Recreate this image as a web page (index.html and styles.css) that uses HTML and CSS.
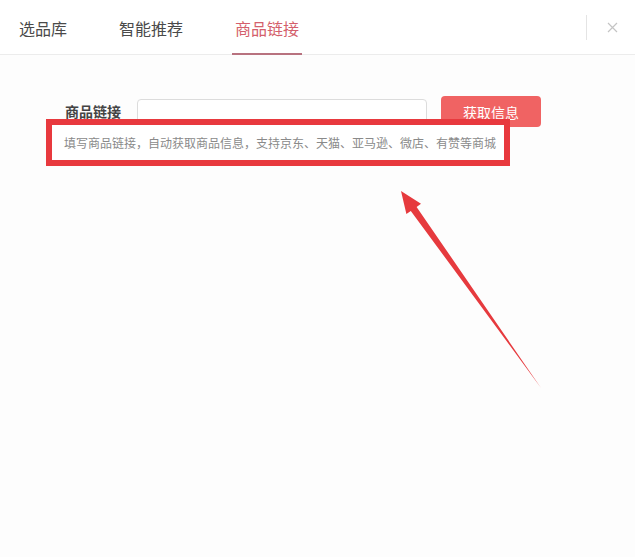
FILE: index.html
```html
<!DOCTYPE html>
<html lang="zh-CN">
<head>
    <meta charset="UTF-8">
    <meta name="viewport" content="width=device-width, initial-scale=1.0">
    <title>商品链接</title>
    <link rel="stylesheet" href="styles.css">
</head>
<body>
    <div class="dialog">
        <div class="tabs">
            <div class="tab">选品库</div>
            <div class="tab">智能推荐</div>
            <div class="tab active">商品链接</div>
            <div class="tab-tools">
                <span class="divider"></span>
                <span class="close">
                    <svg width="11" height="11" viewBox="0 0 11 11">
                        <path d="M1 1 L10 10 M10 1 L1 10" stroke="#c4c4c4" stroke-width="1.2" fill="none"/>
                    </svg>
                </span>
            </div>
        </div>
        <div class="link-form">
            <div class="form-row">
                <label class="form-label">商品链接</label>
                <input class="link-input" type="text">
                <button class="fetch-btn">获取信息</button>
            </div>
            <div class="hint-box">
                <span class="hint">填写商品链接，自动获取商品信息，支持京东、天猫、亚马逊、微店、有赞等商城</span>
            </div>
        </div>
        <!-- 标注箭头 -->
        <svg class="arrow" width="635" height="557" viewBox="0 0 635 557">
            <polygon points="401,191 421,203.7 416.6,206.9 541,388 410.8,210.9 406.4,214.1" fill="#e63a3e"/>
        </svg>
    </div>
</body>
</html>
```

FILE: styles.css
```css
body {
    margin: 0;
    background: #fdfdfd;
    font-family: "Noto Sans CJK SC", "Noto Sans", sans-serif;
}

.dialog {
    position: relative;
    width: 635px;
    height: 557px;
    overflow: hidden;
}

.tabs {
    display: flex;
    align-items: stretch;
    height: 54px;
    padding-left: 16px;
    gap: 46px;
    border-bottom: 1px solid #ececec;
    background: #fff;
}

.tab {
    padding: 2px 3px 0;
    font-size: 16px;
    line-height: 52px;
    color: #4a4a4a;
    margin-bottom: -1px;
    border-bottom: 2px solid transparent;
}

.tab.active {
    color: #d45f6c;
    border-bottom-color: #b8727f;
}

.tab-tools {
    margin-left: auto;
    display: flex;
    align-items: center;
    padding-right: 17px;
}

.divider {
    width: 1px;
    height: 25px;
    background: #e4e4e4;
    margin-right: 20px;
}

.close {
    display: flex;
    width: 11px;
    height: 11px;
}

.link-form {
    display: flex;
    flex-direction: column;
}

.form-row {
    display: flex;
    align-items: flex-start;
    margin: 41px 0 0 65px;
}

.form-label {
    font-size: 14px;
    font-weight: bold;
    color: #444;
    line-height: 30px;
    width: 56px;
    margin-right: 16px;
}

.link-input {
    width: 290px;
    height: 32px;
    margin-top: 3px;
    box-sizing: border-box;
    border: 1px solid #dcdcdc;
    border-radius: 4px;
    background: #fff;
    outline: none;
}

.fetch-btn {
    width: 100px;
    height: 31px;
    margin-left: 14px;
    border: none;
    border-radius: 4px;
    background: #f06363;
    color: #fff;
    font-size: 14px;
    font-family: "Noto Sans CJK SC", sans-serif;
}

.hint-box {
    position: relative;
    z-index: 1;
    display: flex;
    align-items: center;
    width: 464px;
    height: 47px;
    box-sizing: border-box;
    margin: -12px 0 0 46px;
    padding-left: 12px;
    border: 6px solid #e8393e;
    background: #fff;
}

.hint {
    font-size: 12px;
    color: #8a8a8a;
    white-space: nowrap;
}

.arrow {
    position: absolute;
    left: 0;
    top: 0;
    pointer-events: none;
}
```
